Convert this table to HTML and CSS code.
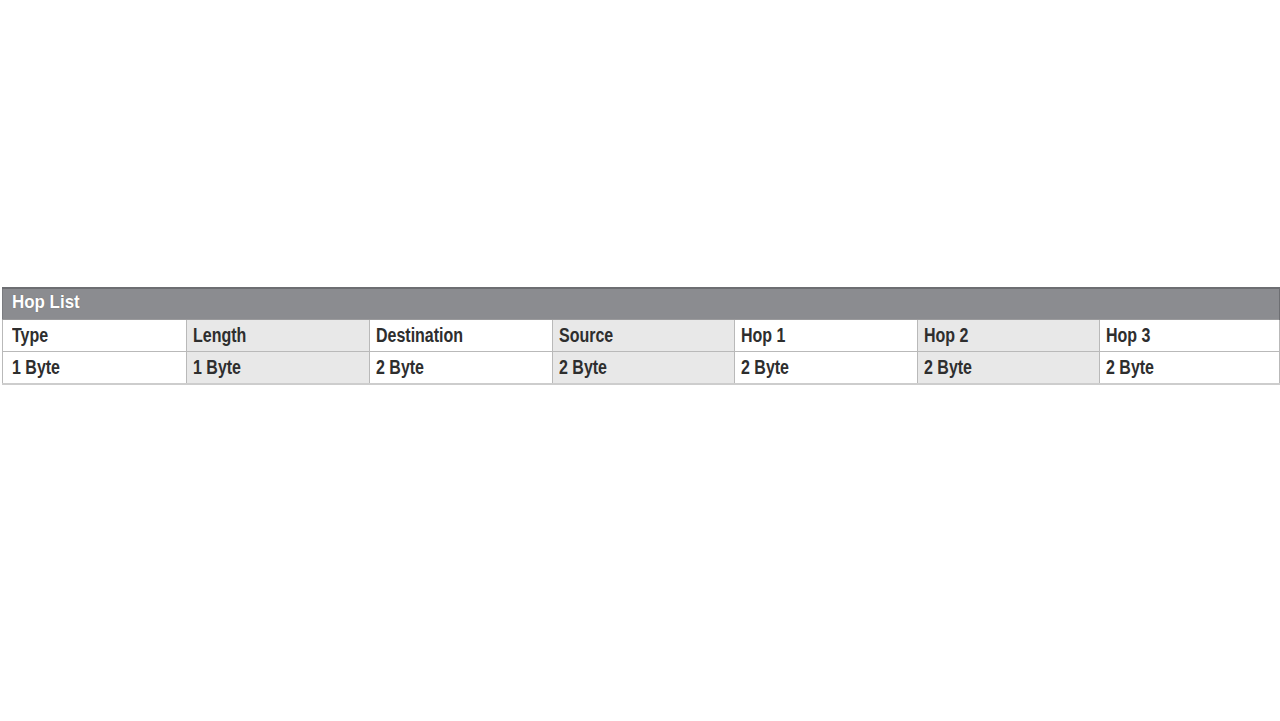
FILE: index.html
```html
<!DOCTYPE html>
<html>
<head>
<meta charset="utf-8">
<link rel="stylesheet" href="styles.css">
</head>
<body>
<div class="wrap">
<table class="hop">
<colgroup>
<col class="col-first"><col class="col-std"><col class="col-std"><col class="col-narrow"><col class="col-std"><col class="col-narrow"><col class="col-last">
</colgroup>
<thead>
<tr><th colspan="7" class="title"><span class="tt">Hop List</span></th></tr>
</thead>
<tbody>
<tr>
<td class="first"><span class="t">Type</span></td>
<td class="alt"><span class="t">Length</span></td>
<td><span class="t">Destination</span></td>
<td class="alt"><span class="t">Source</span></td>
<td><span class="t">Hop 1</span></td>
<td class="alt"><span class="t">Hop 2</span></td>
<td><span class="t">Hop 3</span></td>
</tr>
<tr>
<td class="first"><span class="t">1 Byte</span></td>
<td class="alt"><span class="t">1 Byte</span></td>
<td><span class="t">2 Byte</span></td>
<td class="alt"><span class="t">2 Byte</span></td>
<td><span class="t">2 Byte</span></td>
<td class="alt"><span class="t">2 Byte</span></td>
<td><span class="t">2 Byte</span></td>
</tr>
</tbody>
</table>
</div>
</body>
</html>
```
FILE: styles.css
```css
html, body {
  margin: 0;
  padding: 0;
  background: #ffffff;
}
.wrap {
  padding: 287px 0 0 2px;
}
.hop {
  width: 1277px;
  border-collapse: collapse;
  table-layout: fixed;
  font-family: "Liberation Sans", Arial, sans-serif;
}
.col-first {
  width: 184px;
}
.col-std {
  width: 183px;
}
.col-narrow {
  width: 182px;
}
.col-last {
  width: 180px;
}
.title {
  background: #8b8c90;
  color: #ffffff;
  text-align: left;
  font-size: 18px;
  font-weight: bold;
  height: 26px;
  line-height: 26px;
  padding: 0 0 4px 9px;
  border-top: 2px solid #6d6e72;
  border-left: 1px solid #7a7b7f;
  border-right: 2px solid #6d6e72;
  border-bottom: 1px solid #9a9a9c;
}
.tt {
  display: inline-block;
  transform: scaleX(0.94);
  transform-origin: left center;
  text-shadow: 0 0 1px rgba(0, 0, 0, 0.3);
}
.hop td {
  height: 31px;
  line-height: 31px;
  padding: 0 0 0 6px;
  font-size: 19.5px;
  font-weight: bold;
  color: #2e2e2e;
  border: 1px solid #b9b9b9;
  vertical-align: top;
  white-space: nowrap;
  overflow: hidden;
}
.hop td.first {
  padding-left: 9px;
}
.t {
  display: inline-block;
  transform: scaleX(0.82);
  transform-origin: left center;
}
.hop tbody tr:last-child td {
  border-bottom: 2px solid #cdcdcd;
}
.hop td.alt {
  background: #e8e8e8;
}
```
